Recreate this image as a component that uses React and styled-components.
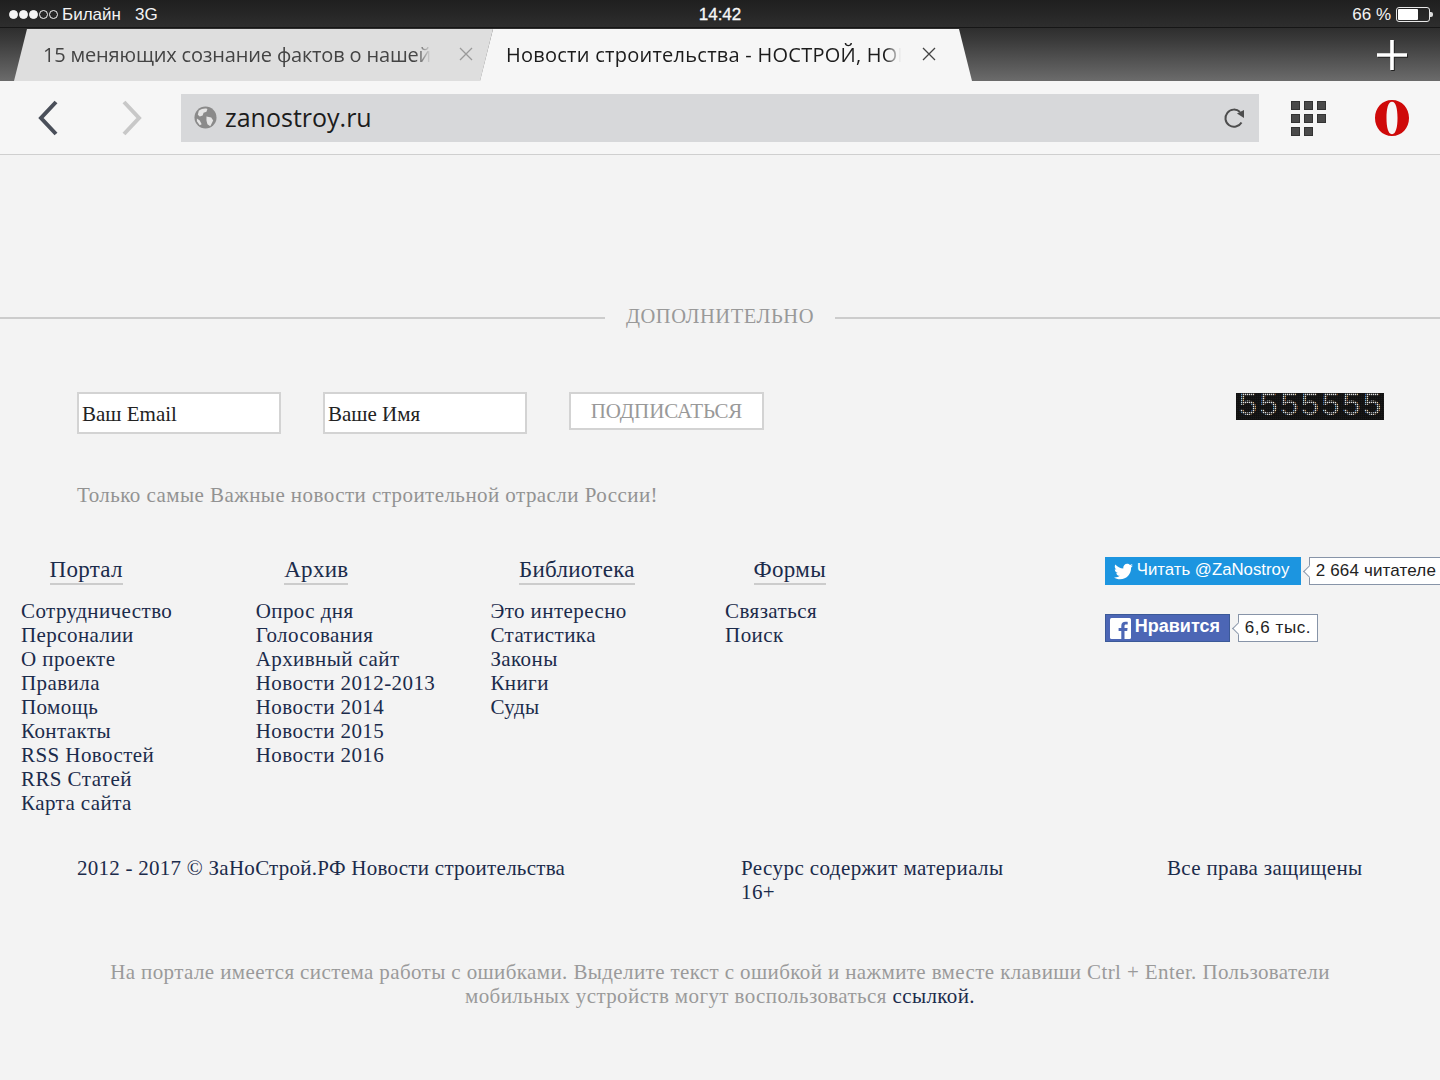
import React from "react";
import styled, { createGlobalStyle } from "styled-components";
import { FaTwitter } from "react-icons/fa";

const Global = createGlobalStyle`
  html, body { margin: 0; padding: 0; background: #f3f3f3; }
  * { box-sizing: border-box; }
`;
const SERIF = `"Liberation Serif", "Noto Serif", serif`;
const SANS = `"Liberation Sans", Arial, sans-serif`;
const OPEN = `"Open Sans", "Noto Sans", sans-serif`;

const Page = styled.div`
  width: 1440px; height: 1080px; overflow: hidden; background: #f3f3f3;
  display: flex; flex-direction: column;
`;
const Chrome = styled.header`
  height: 81px; flex: none; display: flex; flex-direction: column;
  background: linear-gradient(#1f1f1f 0, #2e2e2e 28px, #3a3a3a 40px, #6a6a6a 80px);
`;
const StatusBar = styled.div`
  height: 28px; flex: none; padding: 2px 10px 0 9px; position: relative;
  display: flex; align-items: center; justify-content: space-between;
  font: 17px ${SANS}; color: #f4f4f4; border-bottom: 1px solid #161616;
`;
const StatusGroup = styled.div`display: flex; align-items: center;`;
const Signal = styled.div`display: flex; gap: 1px; margin-right: 4px;`;
const Dot = styled.span`
  width: 9px; height: 9px; border-radius: 50%;
  border: 1px solid #f4f4f4; background: ${p => (p.$on ? "#f4f4f4" : "transparent")};
`;
const Carrier = styled.span`margin-right: 14px;`;
const Clock = styled.span`
  position: absolute; left: 0; right: 0; top: 5px; text-align: center; font-weight: 400; font-size: 17px;
  -webkit-text-stroke: 0.3px #fff;
`;
const Battery = styled.span`
  width: 34px; height: 15px; border: 1px solid #e8e8e8; border-radius: 3px; padding: 1px; position: relative;
  display: block; margin-left: 5px;
  &::before { content: ""; display: block; height: 100%; width: 66%; background: #fff; border-radius: 1px; }
  &::after { content: ""; position: absolute; right: -4px; top: 4px; width: 3px; height: 5px; background: #ddd; border-radius: 0 2px 2px 0; }
`;
const TabStrip = styled.div`
  flex: 1; display: flex; padding: 1px 0 0 14px; position: relative;
`;
const Tab = styled.div`
  height: 52px; position: relative; flex: none; padding-bottom: 2px;
  width: ${p => (p.$active ? 492 : 479)}px;
  margin-left: ${p => (p.$active ? -13 : 0)}px;
  padding-left: ${p => (p.$active ? 26 : 29)}px;
  background: ${p => (p.$active ? "#f6f6f6" : "#dedede")};
  clip-path: ${p => p.$active
    ? "polygon(13px 0, 479px 0, 492px 100%, 0 100%)"
    : "polygon(13px 0, 479px 0, 466px 100%, 0 100%)"};
  display: flex; align-items: center;
  font: 20px ${OPEN};
  letter-spacing: ${p => (p.$active ? "0.25px" : "-0.17px")};
  color: ${p => (p.$active ? "#1c1c1c" : "#444")};
`;
const TabTitle = styled.span`
  width: ${p => p.$w}px; white-space: nowrap; overflow: hidden; flex: none;
  -webkit-mask-image: linear-gradient(to right, #000 96%, transparent 100%);
  mask-image: linear-gradient(to right, #000 96%, transparent 100%);
`;
const TabClose = styled.svg`
  width: 14px; height: 14px; margin-left: ${p => p.$ml}px; flex: none;
  stroke: ${p => p.$c}; stroke-width: 1.3; fill: none;
`;
const NewTab = styled.svg`
  position: absolute; left: 1377px; top: 12px; width: 30px; height: 30px;
  filter: drop-shadow(1px 1px 0 #222);
`;
const Toolbar = styled.div`
  height: 74px; flex: none; background: #f6f6f6; border-bottom: 1px solid #cfcfcf;
  display: flex; align-items: center;
`;
const NavIcon = styled.svg`
  width: 24px; height: 36px; flex: none; fill: none; stroke-width: 4;
  stroke: ${p => p.$c}; margin-left: ${p => p.$ml}px;
`;
const AddressBar = styled.div`
  width: 1078px; height: 48px; flex: none; margin-left: 37px; background: #d7d8da;
  display: flex; align-items: center; padding: 0 12px 0 13px;
  font: 25px ${OPEN}; color: #1c1c1c;
`;
const Url = styled.span`flex: 1; margin-left: 8px; padding-bottom: 1px;`;
const Globe = styled.svg`width: 23px; height: 23px; flex: none;`;
const Reload = styled.svg`width: 24px; height: 24px; flex: none; fill: none; stroke: #4d4d4d; stroke-width: 2;`;
const Speed = styled.div`
  display: grid; grid-template-columns: repeat(3, 9px); grid-auto-rows: 9px; gap: 4px;
  margin: 1px 0 0 32px; width: 35px; height: 35px; flex: none;
`;
const SpeedCell = styled.span`background: #4a4a4a; border: 1px solid #333;`;
const Opera = styled.svg`width: 36px; height: 38px; flex: none; margin-left: 48px;`;

const Divider = styled.div`
  margin-top: 150px; display: flex; align-items: center; gap: 21px;
  font: 20.5px ${SERIF}; letter-spacing: 0.55px; color: #999;
  &::before, &::after { content: ""; flex: 1; height: 2px; background: #ccc; margin-top: 2px; }
`;
const SubscribeRow = styled.div`
  margin-top: 64px; padding: 0 56px 0 77px; display: flex; align-items: flex-start;
`;
const Field = styled.input`
  width: 204px; height: 42px; margin-right: 42px; border: 2px solid #d3d3d3; background: #fff;
  padding: 3px 3px 0; font: 21px ${SERIF}; color: #222; outline: none; border-radius: 0;
  &::placeholder { color: #222; opacity: 1; }
`;
const SubmitButton = styled.button`
  width: 195px; height: 38px; border: 2px solid #d3d3d3; background: #fff; padding: 0;
  font: 21px ${SERIF}; letter-spacing: -0.1px; color: #999; border-radius: 0;
`;
const Counter = styled.div`
  margin-left: auto; margin-top: 1px; width: 148px; height: 27px; background: #1a1a1a; position: relative;
  display: flex; justify-content: space-between; align-items: center; padding: 0 2px;
  font: 33px/27px "Liberation Mono", monospace; color: #e2e2e2; overflow: hidden;
  &::after {
    content: ""; position: absolute; inset: 0;
    background:
      repeating-linear-gradient(to right, rgba(15, 15, 15, 0.7) 0 1px, transparent 1px 2px),
      repeating-linear-gradient(to bottom, rgba(15, 15, 15, 0.7) 0 1px, transparent 1px 2px);
  }
`;
const Tagline = styled.p`
  margin: 49px 0 0 77px; font: 21px/24px ${SERIF}; letter-spacing: 0.44px; color: #929292;
`;
const FooterGrid = styled.div`
  margin-top: 49px; padding-left: 21px; display: flex; align-items: flex-start;
`;
const Column = styled.div`width: 234.7px; flex: none;`;
const ColumnTitle = styled.div`
  display: inline-block; margin-left: 28.5px; margin-bottom: 14px; height: 29px;
  font: 23px/27px ${SERIF}; letter-spacing: 0.3px; color: #1b2b4b; border-bottom: 2px solid #ccc;
`;
const LinkList = styled.ul`margin: 0; padding: 0; list-style: none;`;
const LinkItem = styled.li`
  font: 21px/24px ${SERIF}; letter-spacing: 0.42px; color: #1b2b4b; white-space: nowrap;
`;
const Social = styled.div`
  margin-left: 145px; margin-top: 1px; display: flex; flex-direction: column; gap: 29px; width: 340px; flex: none;
`;
const SocialRow = styled.div`display: flex; align-items: center;`;
const TwButton = styled.div`
  width: 196px; height: 28px; background: #1c95e0; color: #fff; display: flex; align-items: center;
  padding: 0 0 3px 9px; gap: 4px; font: 16.8px ${SANS};
`;
const TwBird = styled(FaTwitter)`width: 19px; height: 19px; margin-top: 4px;`;
const FbButton = styled.div`
  width: 125px; height: 28px; background: #4c66b5; border: 1px solid #3b5998; color: #fff;
  display: flex; align-items: center; padding: 0 0 4px 4px; gap: 4px; font: bold 18px ${SANS};
`;
const FbIcon = styled.svg`width: 21px; height: 21px; flex: none; margin-top: 4px;`;
const Bubble = styled.div`
  height: 28px; background: #fff; border: 1px solid #8794a8; margin-left: 8px; padding: 0 6px;
  display: flex; align-items: center; position: relative; font: 17px ${SANS};
  letter-spacing: ${p => (p.$clip ? "0.15px" : "0.6px")};
  color: #222; white-space: nowrap; flex: ${p => (p.$clip ? "1" : "none")};
  &::before {
    content: ""; position: absolute; left: -5px; top: 9px; width: 8px; height: 8px; background: #fff;
    border-left: 1px solid #8794a8; border-bottom: 1px solid #8794a8; transform: rotate(45deg);
  }
`;
const LegalRow = styled.div`
  margin-top: 41px; padding-left: 77px; display: flex; align-items: flex-start;
  font: 21px/24px ${SERIF}; color: #1b2b4b;
`;
const LegalCell = styled.div`
  width: ${p => p.$w}px; flex: none; letter-spacing: ${p => p.$ls}px; white-space: nowrap;
`;
const Notice = styled.p`
  margin: 56px auto 0; width: 1240px; text-align: center;
  font: 21px/24px ${SERIF}; letter-spacing: 0.39px; color: #9a9a9a;
`;
const NoticeLink = styled.a`color: #1b2b4b; text-decoration: none;`;

const columns = [
  ["Портал", ["Сотрудничество", "Персоналии", "О проекте", "Правила", "Помощь", "Контакты", "RSS Новостей", "RRS Статей", "Карта сайта"]],
  ["Архив", ["Опрос дня", "Голосования", "Архивный сайт", "Новости 2012-2013", "Новости 2014", "Новости 2015", "Новости 2016"]],
  ["Библиотека", ["Это интересно", "Статистика", "Законы", "Книги", "Суды"]],
  ["Формы", ["Связаться", "Поиск"]],
];

const CloseGlyph = ({ c, ml }) => (
  <TabClose $c={c} $ml={ml} viewBox="0 0 14 14"><path d="M1 1l12 12M13 1L1 13" /></TabClose>
);

export default function App() {
  return (
    <Page>
      <Global />
      <Chrome>
        <StatusBar>
          <StatusGroup>
            <Signal>{[1, 1, 1, 0, 0].map((on, i) => <Dot key={i} $on={!!on} />)}</Signal>
            <Carrier>Билайн</Carrier>
            <span>3G</span>
          </StatusGroup>
          <Clock>14:42</Clock>
          <StatusGroup>
            <span>66 %</span>
            <Battery />
          </StatusGroup>
        </StatusBar>
        <TabStrip>
          <Tab>
            <TabTitle $w={388}>15 меняющих сознание фактов о нашей деградации</TabTitle>
            <CloseGlyph c="#9a9a9a" ml={28} />
          </Tab>
          <Tab $active>
            <TabTitle $w={395}>Новости строительства - НОСТРОЙ, НОПРИЗ</TabTitle>
            <CloseGlyph c="#444" ml={21} />
          </Tab>
          <NewTab viewBox="0 0 30 30"><path d="M13.200 0h3.600v13.200H30v3.600H16.800V30h-3.600V16.800H0v-3.600h13.200z" fill="#fff" /></NewTab>
        </TabStrip>
      </Chrome>
      <Toolbar>
        <NavIcon $c="#4a4f5a" $ml={36} viewBox="0 0 24 36"><path d="M20 2L5 18l15 16" /></NavIcon>
        <NavIcon $c="#c8c8c8" $ml={60} viewBox="0 0 24 36"><path d="M4 2l15 16L4 34" /></NavIcon>
        <AddressBar>
          <Globe viewBox="0 0 24 24">
            <circle cx="12" cy="12" r="11.500" fill="#8a8a8a" />
            <path d="M5 5c3-2 6-3 9-2l-1 3-3 1-1 3-3 1-2-2zM13 11l5 1 2 3-3 6-3-2-1-4zM3 13l3 2 2 4-2 1-3-4z" fill="#e4e4e4" />
          </Globe>
          <Url>zanostroy.ru</Url>
          <Reload viewBox="0 0 24 24">
            <path d="M18.500 16.500A8.600 8.600 0 1 1 17 6" />
            <path d="M14 7.500l7-3.500v8z" fill="#4d4d4d" stroke="none" />
          </Reload>
        </AddressBar>
        <Speed>{Array.from({ length: 8 }).map((_, i) => <SpeedCell key={i} />)}</Speed>
        <Opera viewBox="0 0 36 38">
          <path fillRule="evenodd" fill="#cf0a0a" d="M18 1C8 1 1 9 1 19s7 18 17 18 17-8 17-18S28 1 18 1zm0 1.800c4 0 5.500 7.500 5.500 16.200S22 35.200 18 35.200 12.500 27.700 12.500 19 14 2.800 18 2.800z" />
        </Opera>
      </Toolbar>

      <Divider>ДОПОЛНИТЕЛЬНО</Divider>

      <SubscribeRow>
        <Field placeholder="Ваш Email" />
        <Field placeholder="Ваше Имя" />
        <SubmitButton>ПОДПИСАТЬСЯ</SubmitButton>
        <Counter>{"5555555".split("").map((d, i) => <span key={i}>{d}</span>)}</Counter>
      </SubscribeRow>

      <Tagline>Только самые Важные новости строительной отрасли России!</Tagline>

      <FooterGrid>
        {columns.map(([title, links]) => (
          <Column key={title}>
            <ColumnTitle>{title}</ColumnTitle>
            <LinkList>{links.map(l => <LinkItem key={l}>{l}</LinkItem>)}</LinkList>
          </Column>
        ))}
        <Social>
          <SocialRow>
            <TwButton><TwBird />Читать @ZaNostroy</TwButton>
            <Bubble $clip>2 664 читателе</Bubble>
          </SocialRow>
          <SocialRow>
            <FbButton>
              <FbIcon viewBox="0 0 21 21">
                <rect width="21" height="21" rx="1.500" fill="#fff" />
                <path d="M14.500 21v-8h2.700l.4-3h-3.100V8.100c0-.9.300-1.500 1.500-1.500h1.700V3.900c-.3 0-1.300-.1-2.400-.1-2.400 0-4 1.400-4 4.100V10H8.600v3h2.700v8z" fill="#4c66b5" />
              </FbIcon>
              Нравится
            </FbButton>
            <Bubble>6,6 тыс.</Bubble>
          </SocialRow>
        </Social>
      </FooterGrid>

      <LegalRow>
        <LegalCell $w={664} $ls={0.26}>2012 - 2017 © ЗаНоСтрой.РФ Новости строительства</LegalCell>
        <LegalCell $w={426} $ls={0.42}><div>Ресурс содержит материалы</div><div>16+</div></LegalCell>
        <LegalCell $w={220} $ls={0.34}>Все права защищены</LegalCell>
      </LegalRow>

      <Notice>
        На портале имеется система работы с ошибками. Выделите текст с ошибкой и нажмите вместе клавиши Ctrl + Enter. Пользователи мобильных устройств могут воспользоваться <NoticeLink href="#">ссылкой.</NoticeLink>
      </Notice>
    </Page>
  );
}
